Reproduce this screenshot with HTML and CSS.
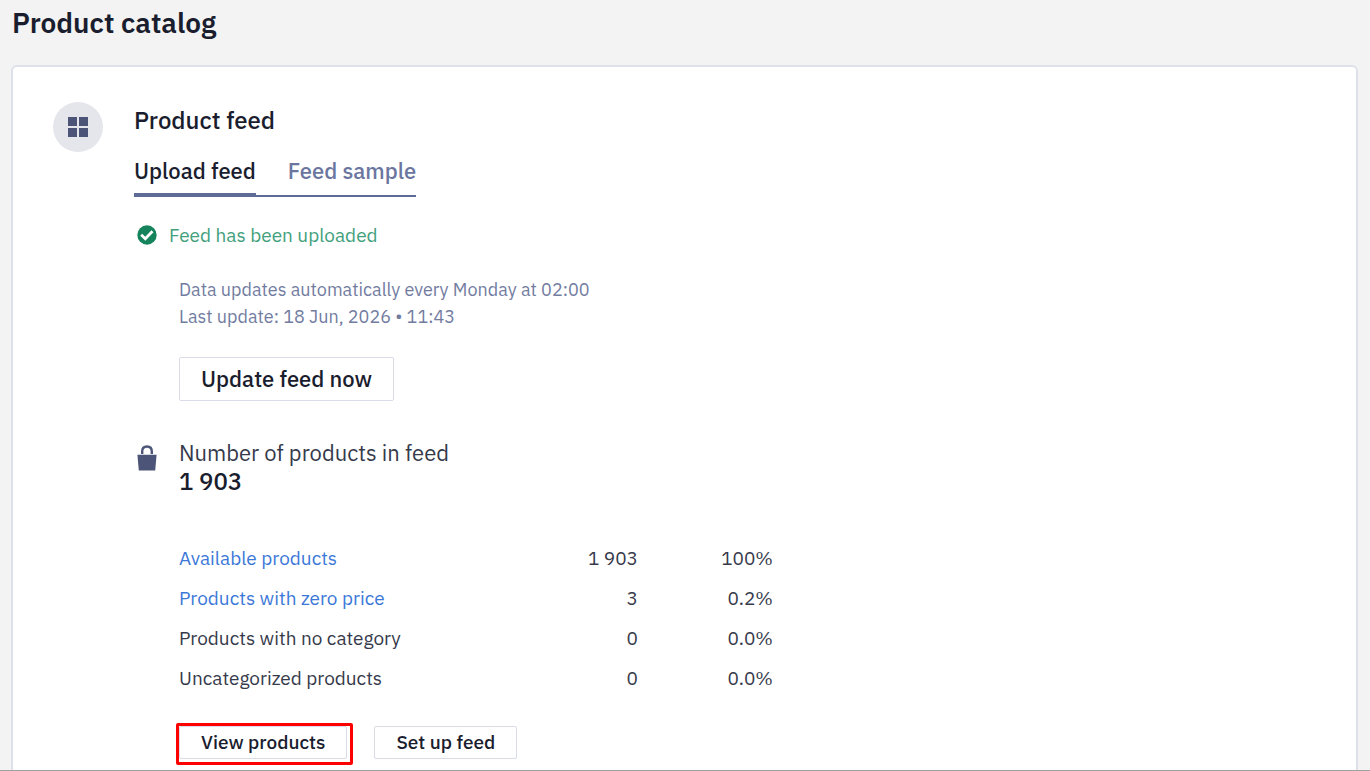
FILE: index.html
```html
<!DOCTYPE html>
<html lang="en">
<head>
<meta charset="utf-8">
<title>Product catalog</title>
<link rel="stylesheet" href="styles.css">
</head>
<body>
<h1 class="page-title">Product catalog</h1>

<main class="card">
	<div class="card-icon">
		<svg width="20" height="20" viewBox="0 0 20 20" fill="#4c5577">
			<rect x="0" y="0" width="9" height="9"/>
			<rect x="11" y="0" width="9" height="9"/>
			<rect x="0" y="11" width="9" height="9"/>
			<rect x="11" y="11" width="9" height="9"/>
		</svg>
	</div>
	<div class="card-body">
		<h2 class="card-title">Product feed</h2>
		<nav class="tabs">
			<a class="tab active" href="#upload">Upload feed</a>
			<a class="tab" href="#sample">Feed sample</a>
		</nav>

		<div class="status">
			<svg width="20" height="20" viewBox="0 0 20 20">
				<circle cx="10" cy="10" r="9.7" fill="#15835b"/>
				<path d="M4.2 9.8l4.1 3.9 7.2-7.4" fill="none" stroke="#fff" stroke-width="2.8"/>
			</svg>
			<span>Feed has been uploaded</span>
		</div>

		<div class="update">
			<p class="note">Data updates automatically every Monday at 02:00</p>
			<p class="note">Last update: 18 Jun, 2026 • 11:43</p>
			<button class="btn btn-large" type="button">Update feed now</button>
		</div>

		<div class="total">
			<svg width="20" height="26" viewBox="0 0 20 26">
				<path d="M5.2 9V6.4C5.2 3.3 7.2 1.5 10 1.5s4.8 1.8 4.8 4.9V9" fill="none" stroke="#4c5577" stroke-width="2.4"/>
				<path d="M.4 9.8h19.2l-1.4 15.8H1.8z" fill="#4c5577"/>
			</svg>
			<div>
				<p class="total-label">Number of products in feed</p>
				<p class="total-value">1 903</p>
			</div>
		</div>

		<table class="stats">
			<tr><td><a href="#available">Available products</a></td><td>1 903</td><td>100%</td></tr>
			<tr><td><a href="#zero">Products with zero price</a></td><td>3</td><td>0.2%</td></tr>
			<tr><td>Products with no category</td><td>0</td><td>0.0%</td></tr>
			<tr><td>Uncategorized products</td><td>0</td><td>0.0%</td></tr>
		</table>

		<div class="actions">
			<div class="highlight"><button class="btn" type="button">View products</button></div>
			<button class="btn" type="button">Set up feed</button>
		</div>
	</div>
</main>
</body>
</html>
```
FILE: styles.css
```css
* {
	box-sizing: border-box;
}

body {
	display: flex;
	flex-direction: column;
	min-height: 100vh;
	margin: 0;
	padding: 0 12px 0 11px;
	border-bottom: 1px solid #a0a0a0;
	background: #f3f3f3;
	color: #1a1d2e;
	font-family: "IBM Plex Sans", "Noto Sans", sans-serif;
	font-size: 19px;
}

h1, h2, p {
	margin: 0;
}

a {
	color: #3c78d8;
	text-decoration: none;
}

.page-title {
	padding: 5px 1px 24px;
	font-size: 28px;
	font-weight: 600;
	line-height: 36px;
}

.card {
	display: flex;
	flex: 1;
	gap: 31px;
	padding: 35px 40px 0;
	border: 2px solid #dfe1ea;
	border-bottom: 0;
	border-radius: 6px 6px 0 0;
	background: #fff;
}

.card-icon {
	display: flex;
	align-items: center;
	justify-content: center;
	width: 50px;
	height: 50px;
	border-radius: 50%;
	background: #e5e6ec;
}

.card-title {
	padding-top: 4px;
	font-size: 24px;
	font-weight: 500;
	line-height: 28px;
}

.tabs {
	display: inline-flex;
	gap: 32px;
	margin-top: 22px;
	border-bottom: 2px solid #5f6b97;
}

.tab {
	padding-bottom: 7px;
	color: #6b769f;
	font-size: 22px;
	font-weight: 500;
	line-height: 30px;
}

.tab.active {
	border-bottom: 2px solid #5f6b97;
	color: #1a1d2e;
}

.status {
	display: flex;
	align-items: center;
	gap: 12px;
	margin-top: 24px;
	padding-left: 3px;
	color: #42a07c;
	line-height: 28px;
}

.update {
	padding: 27px 0 0 45px;
}

.note {
	color: #727c9f;
	font-size: 18px;
	line-height: 27px;
}

.btn {
	height: 33px;
	padding: 0 21px 2px;
	border: 1px solid #d9dbe7;
	border-radius: 2px;
	background: #fff;
	color: #1a1d2e;
	font: 500 19px "IBM Plex Sans", "Noto Sans", sans-serif;
}

.btn-large {
	height: 44px;
	margin-top: 27px;
	font-size: 22px;
}

.total {
	display: flex;
	align-items: flex-start;
	gap: 22px;
	margin-top: 38px;
	padding-left: 3px;
}

.total svg {
	margin-top: 6px;
}

.total-label {
	color: #363a4b;
	font-size: 22px;
	line-height: 28px;
}

.total-value {
	font-size: 24px;
	font-weight: 500;
	line-height: 28px;
}

.stats {
	width: 594px;
	margin: 43px 0 0 45px;
	border-collapse: collapse;
	color: #363a4b;
}

.stats td {
	height: 40px;
	padding: 0;
	text-align: right;
}

.stats td:first-child {
	width: 323px;
	text-align: left;
}

.stats td:last-child {
	width: 135px;
}

.actions {
	display: flex;
	gap: 27px;
	margin: 28px 0 0 45px;
}

.highlight {
	position: relative;
}

/* red frame round the button */
.highlight::after {
	content: "";
	position: absolute;
	inset: -3px -6px -6px -3px;
	border: 3px solid #fe0000;
	border-radius: 2px;
}
```
